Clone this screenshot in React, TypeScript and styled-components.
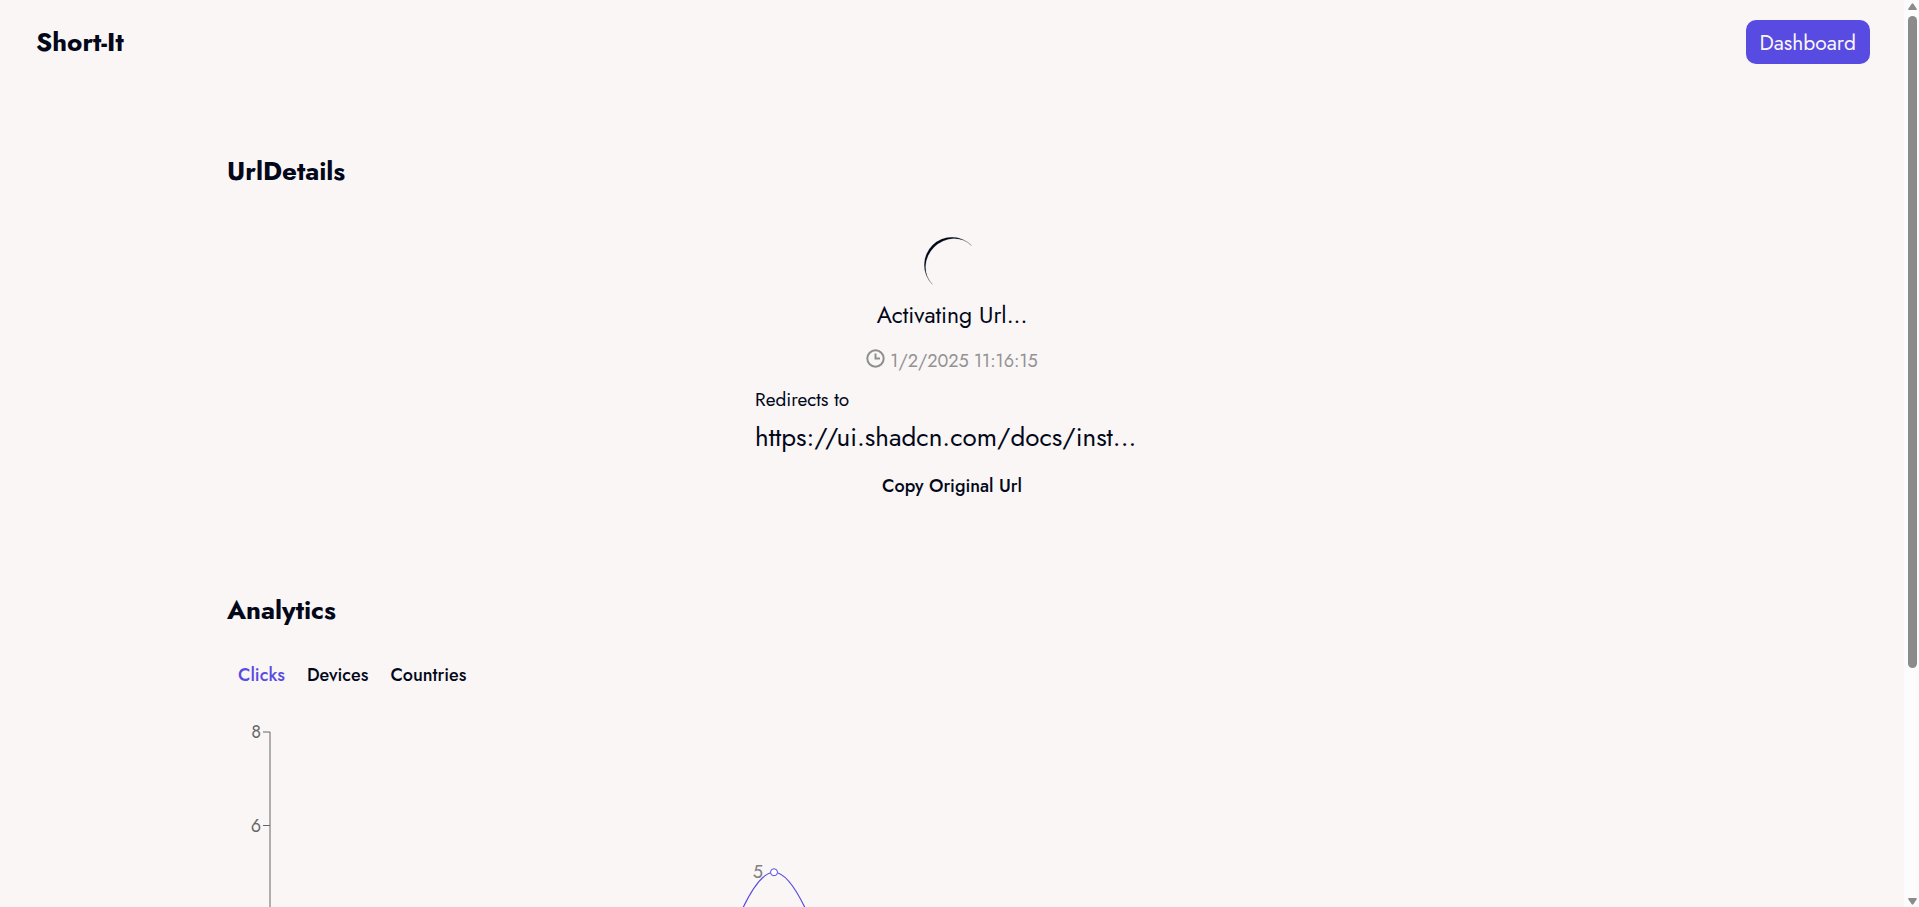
import React, { useState } from "react";
import styled, { createGlobalStyle } from "styled-components";

const ink = "#02081a";
const accent = "#574be2";

const GlobalStyle = createGlobalStyle`
  *, *::before, *::after { box-sizing: border-box; }
  body {
    margin: 0;
    background: #faf6f5;
    color: ${ink};
    font-family: Jost, Lato, sans-serif;
  }
  h1, h2, p { margin: 0; }
  button { font: inherit; color: inherit; background: none; border: 0; padding: 0; cursor: pointer; }
`;

const Shell = styled.div`
  display: flex;
  height: 100vh;
`;

const Viewport = styled.div`
  flex: 1;
  min-width: 0;
  overflow-y: auto;
  scrollbar-width: none;
`;

const Scrollbar = styled.div`
  display: flex;
  flex-direction: column;
  align-items: center;
  justify-content: space-between;
  width: 15px;
  padding: 3px 0 2px 2px;
  background: #fcfcfc;
`;

const Track = styled.div`
  flex: 1;
  display: flex;
  flex-direction: column;
  width: 9px;
  margin: 6px 0 8px;
`;

const Thumb = styled.div`
  flex: 0 0 74.6%;
  border-radius: 5px;
  background: #8b8b8b;
`;

const Header = styled.header`
  display: flex;
  align-items: center;
  justify-content: space-between;
  padding: 20px 34px 20px 36px;
`;

const Logo = styled.a`
  font-size: 26px;
  line-height: 40px;
  font-weight: 700;
  color: inherit;
  text-decoration: none;
`;

const DashboardButton = styled.button`
  && {
    height: 44px;
    padding: 2px 14px 0 13px;
    border-radius: 10px;
    background: ${accent};
    color: #faf6f5;
    font-size: 21px;
    line-height: 42px;
  }
`;

const Page = styled.main`
  max-width: 1450px;
  margin: 0 auto;
  padding-top: 67px;
`;

const Title = styled.h2`
  font-size: 26px;
  line-height: 40px;
  font-weight: 700;
`;

const Details = styled.section`
  display: flex;
  flex-direction: column;
  align-items: center;
  padding: 46px 0 90px;
`;

const Status = styled.h1`
  margin-top: 7px;
  font-size: 23px;
  line-height: 32px;
  font-weight: 400;
`;

const Created = styled.p`
  display: flex;
  align-items: flex-start;
  gap: 5px;
  margin-top: 16px;
  font-size: 18px;
  line-height: 28px;
  color: #929294;
`;

const Redirect = styled.div`
  width: 394px;
  margin-top: 11px;
`;

const RedirectLabel = styled.p`
  font-size: 19px;
  line-height: 28px;
`;

const RedirectUrl = styled.p`
  margin-top: 5px;
  font-size: 26px;
  line-height: 36px;
  white-space: nowrap;
`;

const CopyButton = styled.button`
  && {
    margin-top: 17px;
    font-size: 18px;
    line-height: 28px;
    font-weight: 500;
  }
`;

const Tabs = styled.div`
  display: flex;
  gap: 22px;
  padding: 31px 11px 0;
`;

const Tab = styled.button<{ $active: boolean }>`
  && {
    font-size: 18px;
    line-height: 28px;
    font-weight: 500;
    color: ${(p) => (p.$active ? accent : ink)};
  }
`;

const Chart = styled.svg`
  display: block;
  width: 100%;
  height: 460px;
  margin-top: 23px;
`;

const ChartText = styled.text<{ $fill?: string }>`
  font-size: 18px;
  fill: ${(p) => p.$fill ?? "#666"};
  text-anchor: end;
`;

const plotTop = 20;
const plotHeight = 374;
const axisX = 43;
const step = 126;
const yOf = (v: number) => plotTop + ((8 - v) * plotHeight) / 8;
const clicks = [0, 0, 0, 0, 5, 0, 0, 0];

const linePath = clicks
  .map((v, i) => {
    const x = axisX + i * step;
    if (i === 0) return `M${x} ${yOf(v)}`;
    return `C${x - (step * 2) / 3} ${yOf(clicks[i - 1])} ${x - step / 3} ${yOf(v)} ${x} ${yOf(v)}`;
  })
  .join("");

const Arrow = ({ down }: { down?: boolean }) => (
  <svg width="9" height="7" viewBox="0 0 9 7" aria-hidden="true">
    <path
      d={down ? "M1 0H8Q9.500 .3 8.500 1.500L5.500 6Q4.500 7.500 3.500 6L.5 1.500Q-.5 .3 1 0Z" : "M1 7H8Q9.500 6.700 8.500 5.500L5.500 1Q4.500 -.5 3.500 1L.5 5.500Q-.5 6.700 1 7Z"}
      fill="#8b8b8b"
    />
  </svg>
);

const Spinner = () => (
  <svg width="56" height="55" viewBox="0 0 56 55" role="img" aria-label="Loading">
    <path d="M47.500 8.500A27.500 27.500 0 0 0 8.300 47.300A27.500 25.200 -45 0 1 47.500 8.500Z" fill={ink} stroke={ink} strokeWidth=".2" />
  </svg>
);

const Clock = () => (
  <svg width="19" height="19" viewBox="0 0 19 19" fill="none" stroke="#8e8e90" strokeWidth="2" aria-hidden="true">
    <circle cx="9.500" cy="9.500" r="8.200" />
    <path d="M9.500 4.500V9.500H14" />
  </svg>
);

const ClockSlot = styled.span`
  display: flex;
  padding-top: 2px;
`;

const tabNames = ["Clicks", "Devices", "Countries"];

export default function App() {
  const [active, setActive] = useState("Clicks");
  return (
    <>
      <GlobalStyle />
      <Shell>
        <Viewport>
          <Header>
            <Logo href="#">Short-It</Logo>
            <DashboardButton type="button">Dashboard</DashboardButton>
          </Header>
          <Page>
            <Title>UrlDetails</Title>
            <Details>
              <Spinner />
              <Status>Activating Url...</Status>
              <Created>
                <ClockSlot>
                  <Clock />
                </ClockSlot>
                1/2/2025 11:16:15
              </Created>
              <Redirect>
                <RedirectLabel>Redirects to</RedirectLabel>
                <RedirectUrl>https://ui.shadcn.com/docs/inst...</RedirectUrl>
              </Redirect>
              <CopyButton type="button">Copy Original Url</CopyButton>
            </Details>
            <Title>Analytics</Title>
            <Tabs role="tablist">
              {tabNames.map((name) => (
                <Tab
                  key={name}
                  type="button"
                  role="tab"
                  aria-selected={active === name}
                  $active={active === name}
                  onClick={() => setActive(name)}
                >
                  {name}
                </Tab>
              ))}
            </Tabs>
            <Chart role="img" aria-label="Clicks over time">
              <g stroke="#666">
                <path d={`M${axisX} ${plotTop}V${yOf(0)}`} />
                {[8, 6, 4, 2, 0].map((v) => (
                  <path key={v} d={`M${axisX - 7} ${yOf(v)}H${axisX}`} />
                ))}
              </g>
              {[8, 6, 4, 2, 0].map((v) => (
                <ChartText key={v} x={axisX - 9} y={yOf(v) + 6}>
                  {v}
                </ChartText>
              ))}
              <path d={linePath} fill="none" stroke={accent} strokeWidth="1.200" />
              <ChartText x={axisX + 4 * step - 11} y={yOf(5) + 6} $fill="#808080">
                5
              </ChartText>
              <circle cx={axisX + 4 * step} cy={yOf(5)} r="3.500" fill="#fff" stroke={accent} />
            </Chart>
          </Page>
        </Viewport>
        <Scrollbar aria-hidden="true">
          <Arrow />
          <Track>
            <Thumb />
          </Track>
          <Arrow down />
        </Scrollbar>
      </Shell>
    </>
  );
}
